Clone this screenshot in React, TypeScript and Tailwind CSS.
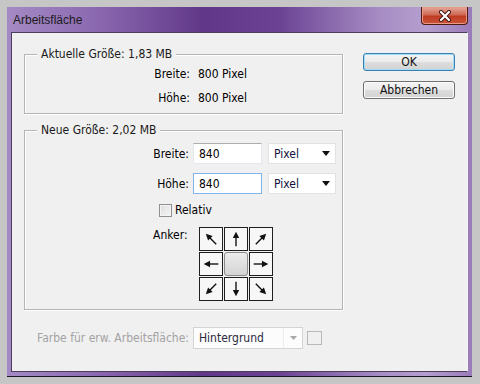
import React from "react";

const font = "font-['DejaVu_Sans_Condensed','DejaVu_Sans',sans-serif] text-[12px] leading-[16px]";

function Arrow({ deg }: { deg: number }) {
    return (
        <svg width="22" height="22" viewBox="0 0 24 24">
            <g transform={`rotate(${deg} 12 12)`}>
                <line x1="4" y1="12" x2="15" y2="12" stroke="#111" strokeWidth="1.5" />
                <polygon points="13,8.5 20,12 13,15.5" fill="#111" />
            </g>
        </svg>
    );
}

const Anchor = [225, 270, 315, 180, -1, 0, 135, 90, 45];

function Group({ title, className, children }: { title: string; className: string; children: React.ReactNode }) {
    return (
        <div className={`relative border border-[#b4b4b4] shadow-[inset_1px_1px_0_#ffffff,1px_1px_0_#ffffff] ${className}`}>
            <span className="absolute -top-[9px] left-[12px] bg-[#f0f0f0] px-[4px] text-[#1a1a1a]">
                {title}
            </span>
            {children}
        </div>
    );
}

function Select({ label }: { label: string }) {
    return (
        <div className="flex h-[21px] w-[68px] items-center justify-between border border-[#e2e2e2] bg-white pl-[5px] pr-[5px] text-[#10103a]">
            <span>{label}</span>
            <svg width="8" height="5" viewBox="0 0 8 5">
                <polygon points="0,0 8,0 4,5" fill="#111" />
            </svg>
        </div>
    );
}

function Button({ label, def }: { label: string; def?: boolean }) {
    return (
        <div
            className={`flex h-[18px] w-[92px] items-center justify-center rounded-[3px] border bg-[linear-gradient(#f4f4f4_0%,#ebebeb_48%,#dddddd_52%,#d2d2d2_100%)] text-[#111] ${
                def
                    ? "border-[#3c7fb1] shadow-[inset_0_0_0_1px_#9fdcf8]"
                    : "border-[#707070] shadow-[inset_0_0_0_1px_#fbfbfb]"
            }`}
        >
            {label}
        </div>
    );
}

export default function App() {
    return (
        <div className={`h-[384px] w-[480px] bg-[#c6c6c6] pt-[7px] pl-[7px] ${font}`}>
            <div className="flex h-[370px] w-[465px] flex-col border-b border-[#1c1424] bg-[linear-gradient(90deg,#a48ac4_0%,#8d6bb2_18%,#613889_42%,#6a4193_58%,#a68cc3_80%,#b59ece_90%,#9a7bba_100%)] px-[4px] pb-[4px]">
                <div className="flex h-[25px] items-start justify-between">
                    <span className="mt-[5px] ml-[2px] font-['Liberation_Sans',sans-serif] text-[12px] text-[#1b1b1b]">
                        Arbeitsfläche
                    </span>
                    <div className="flex h-[18px] w-[47px] items-center justify-center rounded-b-[4px] border border-t-0 border-[#4e1a14] bg-[linear-gradient(#e6a99c_0%,#d06a55_45%,#c03a22_55%,#c9553a_100%)] shadow-[inset_0_0_0_1px_#e99a86]">
                        <svg width="14" height="12" viewBox="0 0 14 12">
                            <path d="M3 2 L11 10 M11 2 L3 10" stroke="#3a1410" strokeWidth="4" strokeLinecap="round" />
                            <path d="M3 2 L11 10 M11 2 L3 10" stroke="#ffffff" strokeWidth="2.2" strokeLinecap="round" />
                        </svg>
                    </div>
                </div>
                <div className="flex flex-1 items-start border border-[#4d3e5e] border-r-[#f4f0f8] bg-[#f0f0f0]">
                    <div className="ml-[12px] mt-[21px] flex w-[319px] flex-col">
                        <Group title="Aktuelle Größe: 1,83 MB" className="h-[60px] pt-[11px]">
                            <div className="flex flex-col gap-[8px]">
                                <div className="flex gap-[8px]">
                                    <span className="w-[165px] text-right">Breite:</span>
                                    <span>800 Pixel</span>
                                </div>
                                <div className="flex gap-[8px]">
                                    <span className="w-[165px] text-right">Höhe:</span>
                                    <span>800 Pixel</span>
                                </div>
                            </div>
                        </Group>
                        <Group title="Neue Größe: 2,02 MB" className="mt-[16px] h-[180px] pt-[12px]">
                            <div className="flex flex-col">
                                <div className="flex items-center">
                                    <span className="w-[164px] text-right">Breite:</span>
                                    <div className="ml-[4px] flex h-[21px] w-[69px] items-center border border-[#e3e9ef] border-t-[#abadb3] bg-white pl-[5px]">
                                        840
                                    </div>
                                    <div className="ml-[6px]">
                                        <Select label="Pixel" />
                                    </div>
                                </div>
                                <div className="mt-[9px] flex items-center">
                                    <span className="w-[164px] text-right">Höhe:</span>
                                    <div className="ml-[4px] flex h-[21px] w-[69px] items-center border border-[#7eb4ea] bg-white pl-[5px]">
                                        840
                                    </div>
                                    <div className="ml-[6px]">
                                        <Select label="Pixel" />
                                    </div>
                                </div>
                                <div className="mt-[8px] flex items-center pl-[134px]">
                                    <div className="h-[13px] w-[13px] border border-[#8e8f8f] bg-[linear-gradient(135deg,#dcdcdc,#f6f6f6)] shadow-[inset_0_0_0_1px_#f4f4f4]" />
                                    <span className="ml-[3px]">Relativ</span>
                                </div>
                                <div className="mt-[9px] flex items-start pl-[128px]">
                                    <span className="w-[46px]">Anker:</span>
                                    <div className="grid grid-cols-[24px_24px_24px] gap-[1px]">
                                        {Anchor.map((deg, i) =>
                                            deg < 0 ? (
                                                <div
                                                    key={i}
                                                    className="h-[24px] w-[24px] rounded-[3px] border border-[#8a8a8a] bg-[linear-gradient(#ececec,#d4d4d4)]"
                                                />
                                            ) : (
                                                <div
                                                    key={i}
                                                    className="flex h-[24px] w-[24px] items-center justify-center border border-[#1e1e1e] bg-[#f7f7f7]"
                                                >
                                                    <Arrow deg={deg} />
                                                </div>
                                            )
                                        )}
                                    </div>
                                </div>
                            </div>
                        </Group>
                        <div className="mt-[17px] flex items-center">
                            <span className="w-[165px] text-right text-[#a3a3a3]">Farbe für erw. Arbeitsfläche:</span>
                            <div className="ml-[4px] flex h-[22px] w-[110px] items-center border border-[#d4d4d4] bg-[#fcfcfc]">
                                <span className="flex-1 pl-[5px] text-[#2a2a40]">Hintergrund</span>
                                <div className="flex h-full w-[19px] items-center justify-center border-l border-[#ececec]">
                                    <svg width="7" height="4" viewBox="0 0 7 4">
                                        <polygon points="0,0 7,0 3.5,4" fill="#a8a8a8" />
                                    </svg>
                                </div>
                            </div>
                            <div className="ml-[4px] h-[14px] w-[15px] border border-[#b8b8b8]" />
                        </div>
                    </div>
                    <div className="ml-[20px] mt-[20px] flex flex-col gap-[10px]">
                        <Button label="OK" def />
                        <Button label="Abbrechen" />
                    </div>
                </div>
            </div>
        </div>
    );
}
